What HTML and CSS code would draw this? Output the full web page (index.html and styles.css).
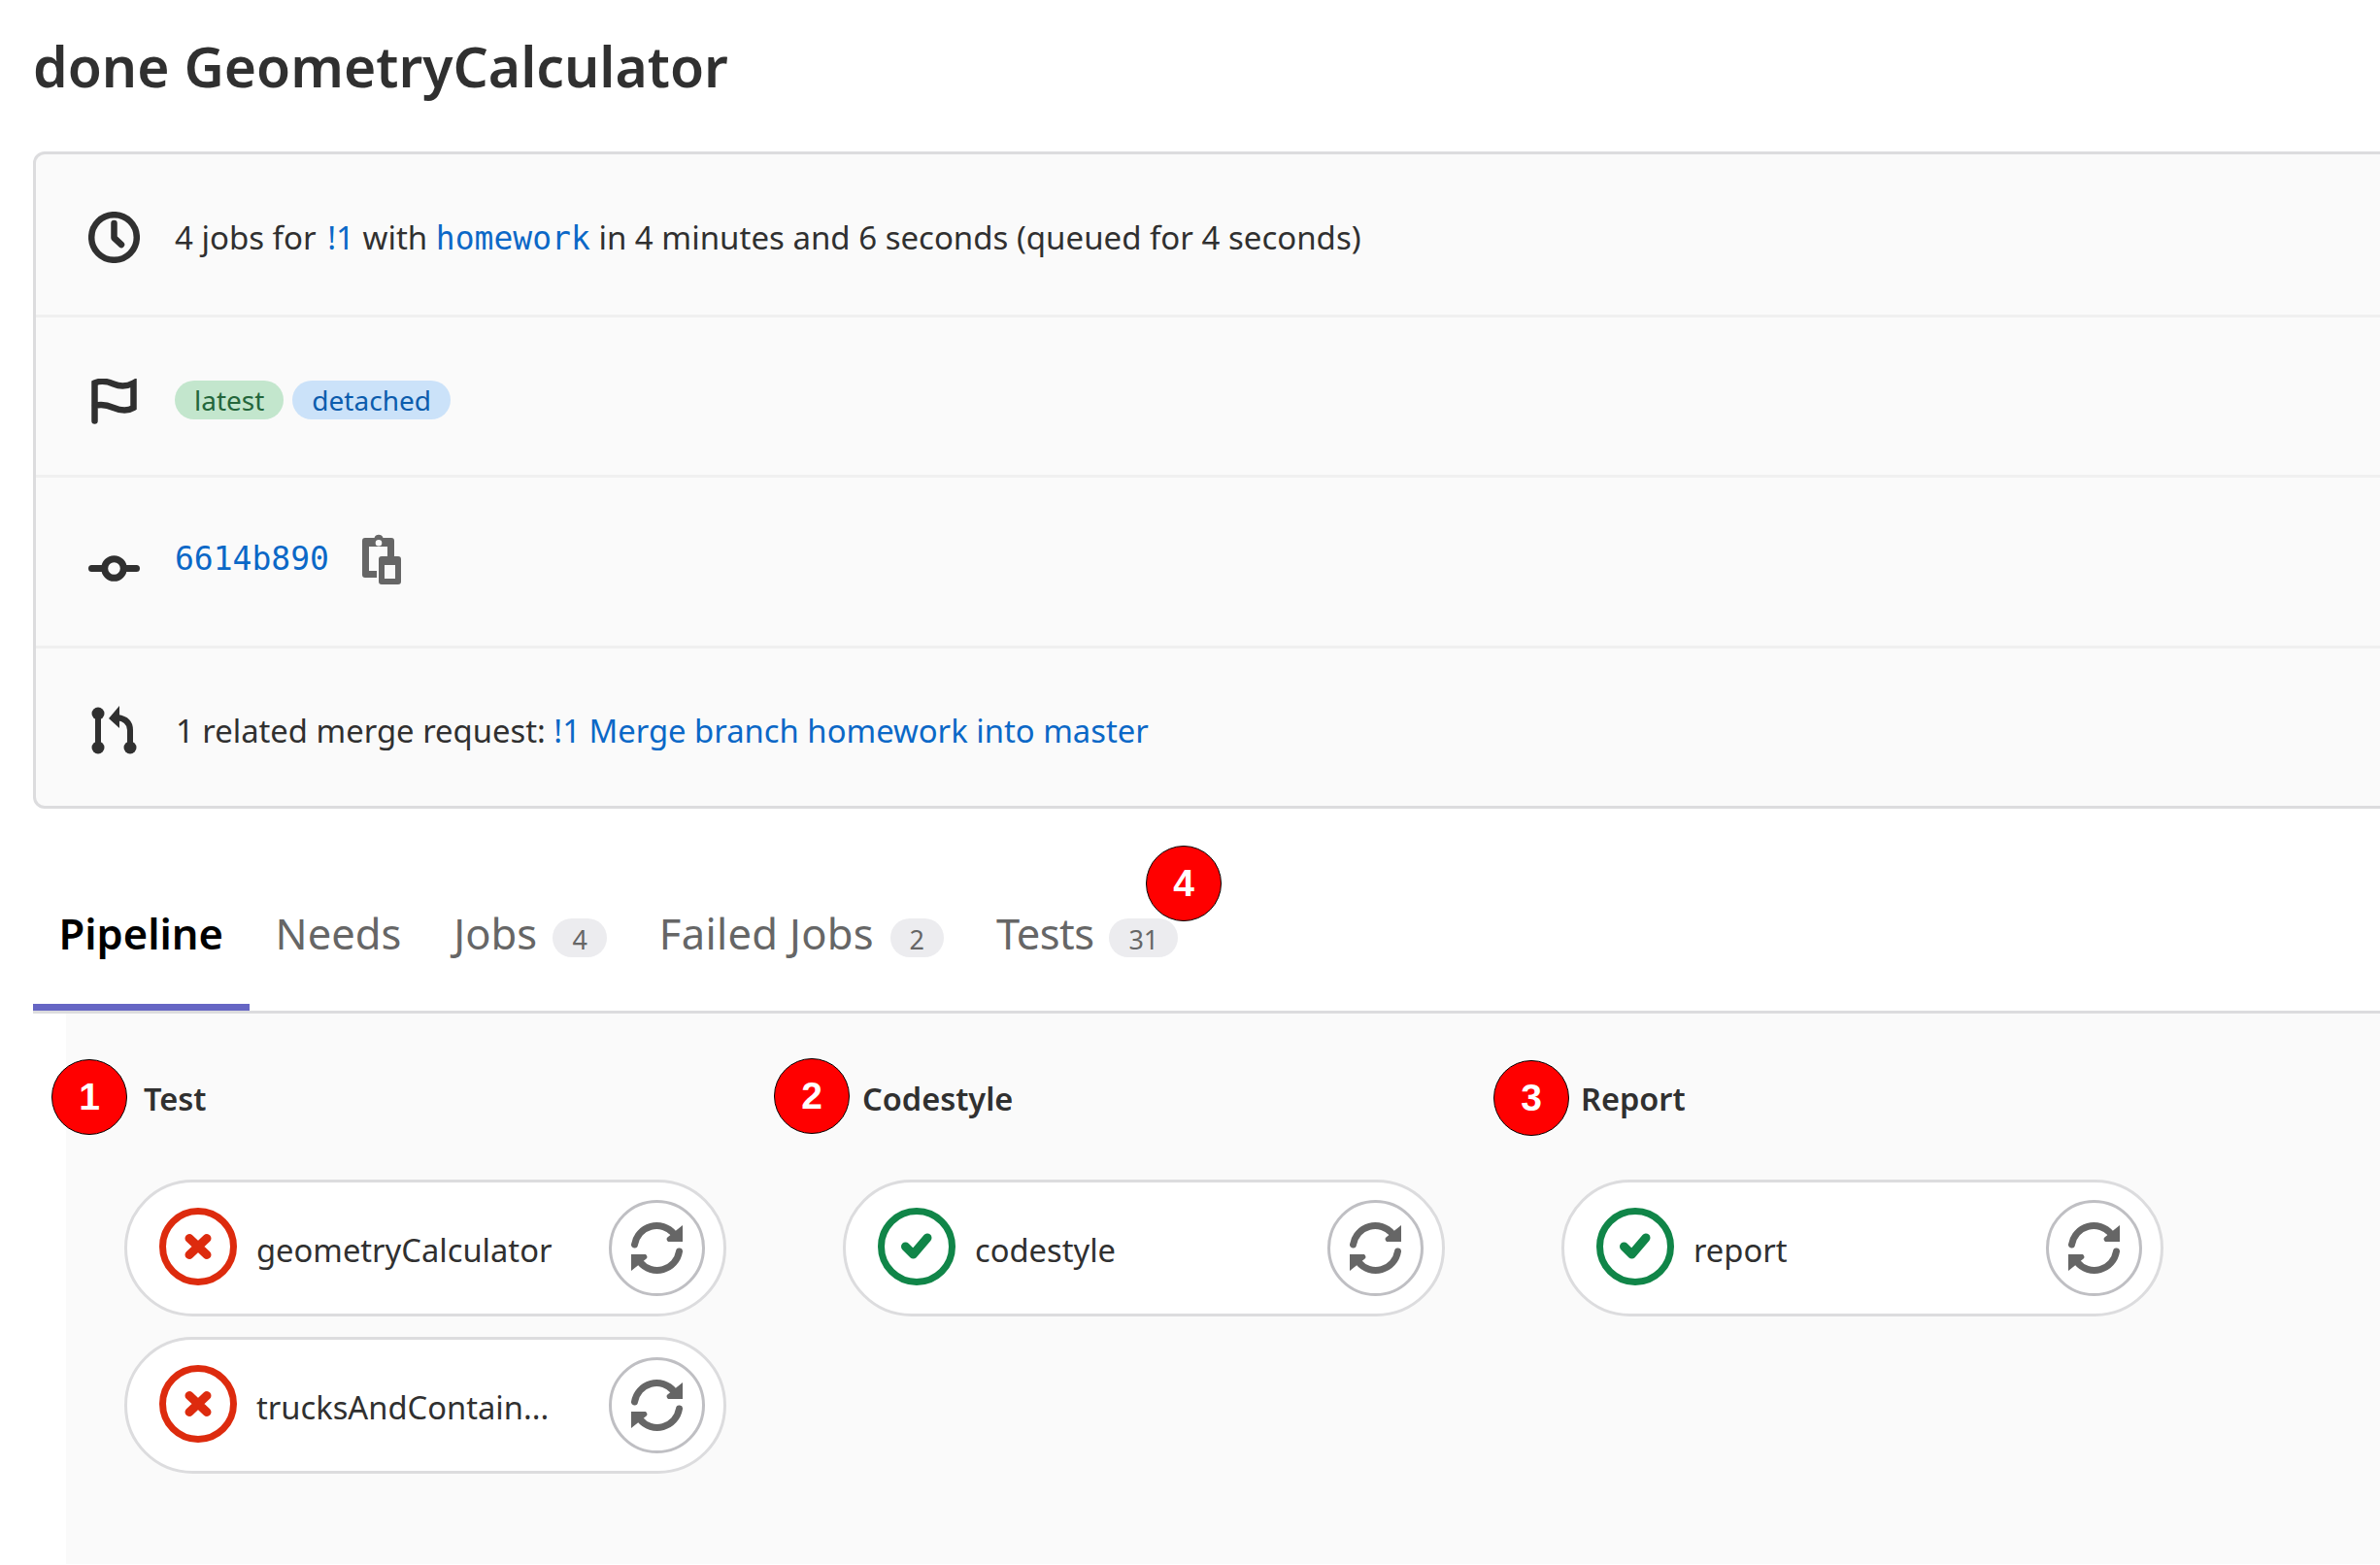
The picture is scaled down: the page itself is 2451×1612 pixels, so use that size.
FILE: index.html
```html
<!DOCTYPE html>
<html lang="en">
<head>
    <meta charset="UTF-8">
    <title>done GeometryCalculator</title>
    <link rel="stylesheet" href="styles.css">
</head>
<body>
    <div class="container">
        <h1>done GeometryCalculator</h1>

        <section class="info-box">
            <div class="info-row row-time">
                <span class="row-icon">
                    <svg width="53" height="53" viewBox="0 0 53 53" fill="none" stroke="#303030" stroke-width="6.500" stroke-linecap="round" stroke-linejoin="round"><circle cx="26.500" cy="26.500" r="23.300"/><path d="M26.500 12V27L34 34"/></svg>
                </span>
                <p>4 jobs for <a href="#" class="mr-link">!1</a> with <a href="#" class="mono">homework</a> in 4 minutes and 6 seconds (queued for 4 seconds)</p>
            </div>
            <div class="info-row row-badges">
                <span class="row-icon">
                    <svg width="47" height="47" viewBox="0 0 47 47" fill="none" stroke="#303030" stroke-width="6.500" stroke-linecap="round" stroke-linejoin="miter"><path d="M3.500 43.500V4.500C10 1.500 16 2.500 23 5.500S37 8 43.500 4.500V30C37 34 30 33 23 30S10 26 3.500 28"/></svg>
                </span>
                <span class="tag tag-green">latest</span>
                <span class="tag tag-blue">detached</span>
            </div>
            <div class="info-row row-commit">
                <span class="row-icon">
                    <svg width="53" height="27" viewBox="0 0 53 27" fill="none" stroke="#303030" stroke-width="7" stroke-linecap="round"><circle cx="26.500" cy="13.500" r="9.800"/><path d="M3.500 13.500H16M37 13.500H49.500"/></svg>
                </span>
                <a href="#" class="mono">6614b890</a>
                <svg class="copy-icon" width="40" height="53" viewBox="0 0 40 53" fill="#666"><path fill-rule="evenodd" d="M3 5H12.500A4.800 4.800 0 0 1 21.500 5H30A3 3 0 0 1 33 8V24H26V14H7V39H15V46H3A3 3 0 0 1 0 43V8A3 3 0 0 1 3 5ZM17 7A3.300 3.300 0 1 0 17 13.600A3.300 3.300 0 1 0 17 7ZM20 24H37A3 3 0 0 1 40 27V50A3 3 0 0 1 37 53H20A3 3 0 0 1 17 50V27A3 3 0 0 1 20 24ZM23 33V47H34V33Z"/></svg>
            </div>
            <div class="info-row row-merge">
                <span class="row-icon">
                    <svg width="47" height="50" viewBox="0 0 47 50" fill="#303030"><circle cx="7" cy="8" r="6.500"/><circle cx="7" cy="43" r="6.500"/><circle cx="40" cy="43" r="6.500"/><path d="M18 13L29 0V23Z"/><path d="M7 8V43M40 43V25Q40 14 27 12" fill="none" stroke="#303030" stroke-width="6"/></svg>
                </span>
                <p>1 related merge request: <a href="#">!1 Merge branch homework into master</a></p>
            </div>
        </section>

        <nav class="tabs">
            <a href="#" class="tab active">Pipeline</a>
            <a href="#" class="tab">Needs</a>
            <a href="#" class="tab">Jobs <span class="count">4</span></a>
            <a href="#" class="tab tab-failed">Failed Jobs <span class="count">2</span></a>
            <a href="#" class="tab tab-tests">Tests <span class="count">31</span></a>
            <span class="marker marker-tests">4</span>
        </nav>

        <section class="pipeline">
            <div class="stage">
                <span class="marker marker-test">1</span>
                <h2>Test</h2>
                <div class="job">
                    <svg class="status" width="80" height="80" viewBox="0 0 80 80" fill="none" stroke="#dd2b0e"><circle cx="40" cy="40" r="36.500" stroke-width="7"/><path d="M31 31.500L49 48.500M49 31.500L31 48.500" stroke-width="9" stroke-linecap="round"/></svg>
                    <span class="job-name">geometryCalculator</span>
                    <button class="retry"><svg width="53" height="53" viewBox="0 0 53 53"><use href="#retry-icon"/></svg></button>
                </div>
                <div class="job">
                    <svg class="status" width="80" height="80" viewBox="0 0 80 80" fill="none" stroke="#dd2b0e"><circle cx="40" cy="40" r="36.500" stroke-width="7"/><path d="M31 31.500L49 48.500M49 31.500L31 48.500" stroke-width="9" stroke-linecap="round"/></svg>
                    <span class="job-name">trucksAndContain...</span>
                    <button class="retry"><svg width="53" height="53" viewBox="0 0 53 53"><use href="#retry-icon"/></svg></button>
                </div>
            </div>
            <div class="stage">
                <span class="marker marker-codestyle">2</span>
                <h2>Codestyle</h2>
                <div class="job">
                    <svg class="status" width="80" height="80" viewBox="0 0 80 80" fill="none" stroke="#108548"><circle cx="40" cy="40" r="36.500" stroke-width="7"/><path d="M28.500 40L36.500 48L51 31" stroke-width="9" stroke-linecap="round" stroke-linejoin="round"/></svg>
                    <span class="job-name">codestyle</span>
                    <button class="retry"><svg width="53" height="53" viewBox="0 0 53 53"><use href="#retry-icon"/></svg></button>
                </div>
            </div>
            <div class="stage">
                <span class="marker marker-report">3</span>
                <h2>Report</h2>
                <div class="job">
                    <svg class="status" width="80" height="80" viewBox="0 0 80 80" fill="none" stroke="#108548"><circle cx="40" cy="40" r="36.500" stroke-width="7"/><path d="M28.500 40L36.500 48L51 31" stroke-width="9" stroke-linecap="round" stroke-linejoin="round"/></svg>
                    <span class="job-name">report</span>
                    <button class="retry"><svg width="53" height="53" viewBox="0 0 53 53"><use href="#retry-icon"/></svg></button>
                </div>
            </div>
        </section>
    </div>

    <svg class="icon-defs" width="0" height="0">
        <symbol id="retry-icon" viewBox="0 0 53 53">
            <path d="M3.500 23A23 23 0 0 1 44 12M49.500 30A23 23 0 0 1 9 41" fill="none" stroke="#666" stroke-width="7" stroke-linecap="round"/>
            <path d="M53 3V20H38Q35 17 38 15ZM0 33H15Q18 36 15 38L0 50Z" fill="#666"/>
        </symbol>
    </svg>
</body>
</html>
```

FILE: styles.css
```css
* {
    margin: 0;
    padding: 0;
    box-sizing: border-box;
}

html, body {
    height: 1612px;
    overflow: hidden;
}

body {
    font-family: "Noto Sans", sans-serif;
    font-size: 33px;
    color: #303030;
    background: #fff;
}

a {
    color: #0b68c7;
    text-decoration: none;
}

.container {
    width: 2700px;
    padding-left: 34px;
}

h1 {
    font-size: 57px;
    font-weight: 600;
    line-height: 76px;
    padding-top: 30px;
    margin-bottom: 50px;
}

.mono {
    font-family: "DejaVu Sans Mono", monospace;
    font-size: 33px;
}

/* info box */
.info-box {
    height: 677px;
    background: #fafafa;
    border: 3px solid #dcdcde;
    border-radius: 12px;
}

.info-row {
    display: flex;
    align-items: center;
    padding-left: 54px;
    border-bottom: 3px solid #f0f0f0;
}

.row-icon {
    display: flex;
    justify-content: center;
    width: 53px;
    margin-right: 36px;
}

.row-time {
    height: 168px;
    padding-top: 6px;
}

.mr-link {
    margin-left: 3px;
}

.row-badges {
    height: 165px;
    padding-top: 10px;
}

.row-commit {
    height: 176px;
    padding-top: 14px;
}

.row-commit .mono {
    margin-top: -20px;
}

.row-merge {
    height: 162px;
    padding-top: 6px;
    border-bottom: none;
    font-size: 32.8px;
}

.row-merge p {
    margin-left: 1px;
}

.tag {
    height: 40px;
    line-height: 40px;
    padding: 0 20px;
    margin-right: 9px;
    margin-top: -3px;
    border-radius: 20px;
    font-size: 28px;
}

.tag-green {
    background: #c3e6cd;
    color: #24663b;
}

.tag-blue {
    background: #cbe2f9;
    color: #0b5cad;
}

.copy-icon {
    margin-left: 34px;
    margin-top: -20px;
}

/* tabs */
.tabs {
    position: relative;
    display: flex;
    height: 211px;
    padding-top: 90px;
    border-bottom: 3px solid #dcdcde;
}

.tab {
    display: flex;
    align-items: flex-start;
    height: 118px;
    padding: 8px 27px 0;
    font-size: 43.5px;
    line-height: 60px;
    color: #666;
    white-space: pre;
}

.tab.active {
    color: #000;
    font-weight: 600;
    padding: 8px 26.500px 0;
    border-bottom: 7px solid #6666c4;
}

.tab-failed {
    letter-spacing: .3px;
}

.tab-tests {
    letter-spacing: -.5px;
}

.count {
    height: 40px;
    min-width: 55px;
    margin: 15px 0 0 5px;
    padding: 0 20px;
    border-radius: 20px;
    background: #ececef;
    color: #666;
    font-size: 27px;
    line-height: 44px;
    letter-spacing: 0;
    text-align: center;
}

/* pipeline graph */
.pipeline {
    display: flex;
    height: 567px;
    margin-left: 34px;
    background: #fafafa;
}

.stage {
    position: relative;
    flex: 0 0 740px;
    padding: 63px 0 0 60px;
}

.stage h2 {
    font-size: 32.5px;
    font-weight: 600;
    line-height: 50px;
    padding-left: 20px;
    margin-bottom: 58px;
}

.job {
    display: flex;
    align-items: center;
    width: 620px;
    height: 141px;
    margin-bottom: 21px;
    padding: 0 19px 0 33px;
    background: #fff;
    border: 3px solid #dcdcde;
    border-radius: 71px;
}

.status {
    margin-top: -4px;
}

.job-name {
    flex: 1;
    margin-left: 20px;
    font-size: 32.7px;
    padding-top: 3px;
}

.retry {
    display: flex;
    align-items: center;
    justify-content: center;
    width: 99px;
    height: 99px;
    background: #fff;
    border: 3px solid #bfbfc3;
    border-radius: 50%;
}

/* red numbered markers, they sit on top of the page */
.marker {
    position: absolute;
    width: 78px;
    height: 78px;
    border: 1px solid #000;
    border-radius: 50%;
    box-shadow: 0 0 0 1px #fff;
    background: #f00;
    color: #fff;
    font-family: "Liberation Sans", sans-serif;
    font-size: 39px;
    font-weight: 700;
    line-height: 76px;
    text-align: center;
}

.marker-test {
    top: 47px;
    left: -15px;
}

.marker-codestyle {
    top: 46px;
    left: -11px;
}

.marker-report {
    top: 48px;
    left: -10px;
}

.marker-tests {
    top: 38px;
    left: 1146px;
}

.icon-defs {
    position: absolute;
}
```
